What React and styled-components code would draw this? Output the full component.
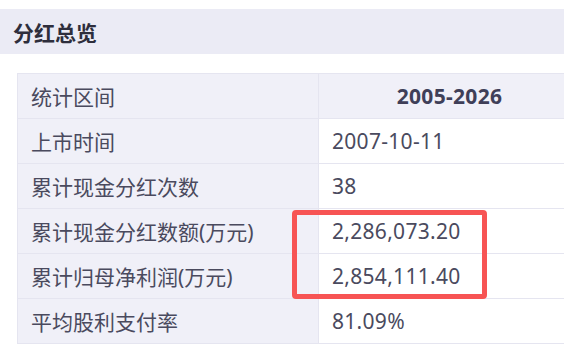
import styled, { createGlobalStyle } from "styled-components"

const rows = [
    { label: "上市时间", value: "2007-10-11" },
    { label: "累计现金分红次数", value: "38" },
    { label: "累计现金分红数额(万元)", value: "2,286,073.20" },
    { label: "累计归母净利润(万元)", value: "2,854,111.40" },
    { label: "平均股利支付率", value: "81.09%" },
]

const App = () => {
    return (
        <>
            <GlobalStyle />
            <Page>
                <SectionHeader>分红总览</SectionHeader>
                <TableWrap>
                    <Table>
                        <colgroup>
                            <col style={{ width: 301 }} />
                            <col style={{ width: 249 }} />
                        </colgroup>
                        <tbody>
                            <tr>
                                <LabelCell>统计区间</LabelCell>
                                <ValueCell $head>2005-2026</ValueCell>
                            </tr>
                            {rows.map((r) => (
                                <tr key={r.label}>
                                    <LabelCell>{r.label}</LabelCell>
                                    <ValueCell>{r.value}</ValueCell>
                                </tr>
                            ))}
                        </tbody>
                    </Table>
                    <Highlight />
                </TableWrap>
            </Page>
        </>
    )
}

const GlobalStyle = createGlobalStyle`
    body {
        margin: 0;
        background: #fff;
        overflow: hidden;
        font-family: "Noto Sans", "Noto Sans CJK SC", sans-serif;
    }
`

const Page = styled.div`
    width: 580px;
    padding-top: 9px;
`

const SectionHeader = styled.div`
    height: 45px;
    width: 580px;
    box-sizing: border-box;
    padding-left: 13px;
    display: flex;
    align-items: center;
    background: #ebebf5;
    color: #2e2e3c;
    font-size: 21px;
    font-weight: 700;
`

const TableWrap = styled.div`
    position: relative;
    margin: 19px 0 0 17px;
    width: 551px;
`

const Table = styled.table`
    border-collapse: collapse;
    table-layout: fixed;
    width: 551px;
    font-size: 21px;
    color: #4a4a5e;
    td {
        height: 45px;
        padding: 0 0 0 13px;
        border: 1px solid #e5e5f0;
        box-sizing: border-box;
    }
`

const LabelCell = styled.td`
    background: #f0f0f8;
`

const ValueCell = styled.td`
    background: ${(p) => (p.$head ? "#f0f0f8" : "#fff")};
    text-align: ${(p) => (p.$head ? "center" : "left")};
    font-weight: ${(p) => (p.$head ? 700 : 400)};
    color: ${(p) => (p.$head ? "#3f3f58" : "#4a4a5e")};
    letter-spacing: 0.3px;
`

const Highlight = styled.div`
    position: absolute;
    left: 275px;
    top: 137px;
    width: 195px;
    height: 89px;
    box-sizing: border-box;
    border: 5px solid #f75454;
    border-radius: 4px;
`

export default App
